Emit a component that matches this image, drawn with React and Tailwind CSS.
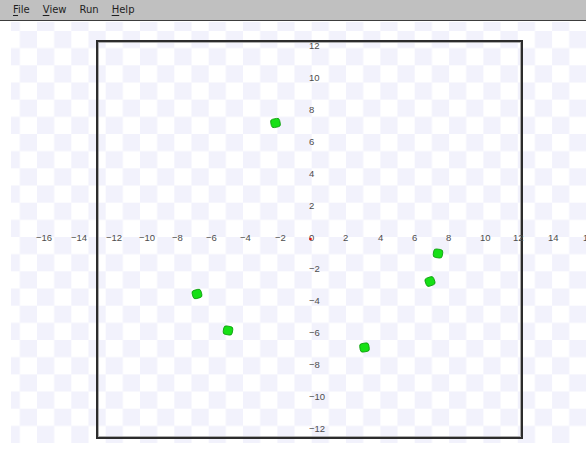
import React from 'react';

// Plot geometry (page pixels): origin, cell size of the grid backdrop, axis scales
const OX = 311.7;
const OY = 237;
const CELL = 17.17;
const SY = 15.95;

// x-axis labels: value and left edge of the text
const xLabels = [
  [-16, 36], [-14, 71], [-12, 106], [-10, 139], [-8, 172], [-6, 206], [-4, 240], [-2, 275],
  [0, 309], [2, 343], [4, 378], [6, 412], [8, 446], [10, 480], [12, 513], [14, 548], [16, 583],
];

const yLabels = [12, 10, 8, 6, 4, 2, -2, -4, -6, -8, -10, -12];

// scattered markers
const points = [
  [275.5, 123, -12],
  [438, 253.5, 8],
  [430, 281.5, -20],
  [197, 294, -15],
  [228, 330.5, 10],
  [364.5, 347.5, -10],
];

const fmt = (v) => (v < 0 ? '\u2212' + Math.abs(v) : String(v));

const MenuItem = ({ label, mnemonic = true }) => (
  <span className="text-[#1e1e1e]">
    {mnemonic ? <span className="underline underline-offset-2">{label[0]}</span> : label[0]}
    {label.slice(1)}
  </span>
);

const Plot = () => (
  <svg width="590" height="421" viewBox="11 22 590 421" className="block">
    <defs>
      <pattern id="checks" patternUnits="userSpaceOnUse" x={OX} y={OY} width={CELL * 2} height={CELL * 2}>
        <rect x="0" y="0" width={CELL * 2} height={CELL * 2} fill="#ffffff" />
        <rect x={CELL} y="0" width={CELL} height={CELL} fill="#f2f2fc" />
        <rect x="0" y={CELL} width={CELL} height={CELL} fill="#f2f2fc" />
      </pattern>
    </defs>
    <rect x="11" y="22" width="590" height="421" fill="url(#checks)" />

    {/* frame */}
    <rect x="97" y="41" width="425" height="397" fill="none" stroke="#2c2c2c" strokeWidth="2" />
    <rect x="98.5" y="42.5" width="422" height="394" fill="none" stroke="#9a9a9a" strokeWidth="0.8" />

    <g fontFamily="'Liberation Sans', Arial, sans-serif" fontSize="9.5" fill="#4d4d4d">
      {xLabels.map(([v, x]) => (
        <text key={'x' + v} x={x} y={OY + 3.5}>{fmt(v)}</text>
      ))}
      {yLabels.map((v) => (
        <text key={'y' + v} x="309" y={OY - v * SY + 3.5}>{fmt(v)}</text>
      ))}
    </g>

    <circle cx="310.5" cy="239" r="1.3" fill="#e01010" />

    {points.map(([x, y, r], i) => (
      <rect
        key={i}
        x={x - 4.6}
        y={y - 4.3}
        width="9.2"
        height="8.6"
        rx="2.6"
        fill="#16e016"
        stroke="#0b9a0b"
        strokeWidth="0.8"
        transform={`rotate(${r} ${x} ${y})`}
      />
    ))}
  </svg>
);

export default function App() {
  return (
    <div className="w-[586px] h-[453px] overflow-hidden bg-white font-['DejaVu_Sans',sans-serif]">
      <div className="h-[21px] bg-[#c0c0c0] border-b border-[#3c3c3c] flex items-center gap-[13px] pl-[13px] text-[10px] leading-none">
        <MenuItem label="File" />
        <MenuItem label="View" />
        <MenuItem label="Run" mnemonic={false} />
        <MenuItem label="Help" />
      </div>
      <div className="pl-[11px] pt-px">
        <Plot />
      </div>
    </div>
  );
}
